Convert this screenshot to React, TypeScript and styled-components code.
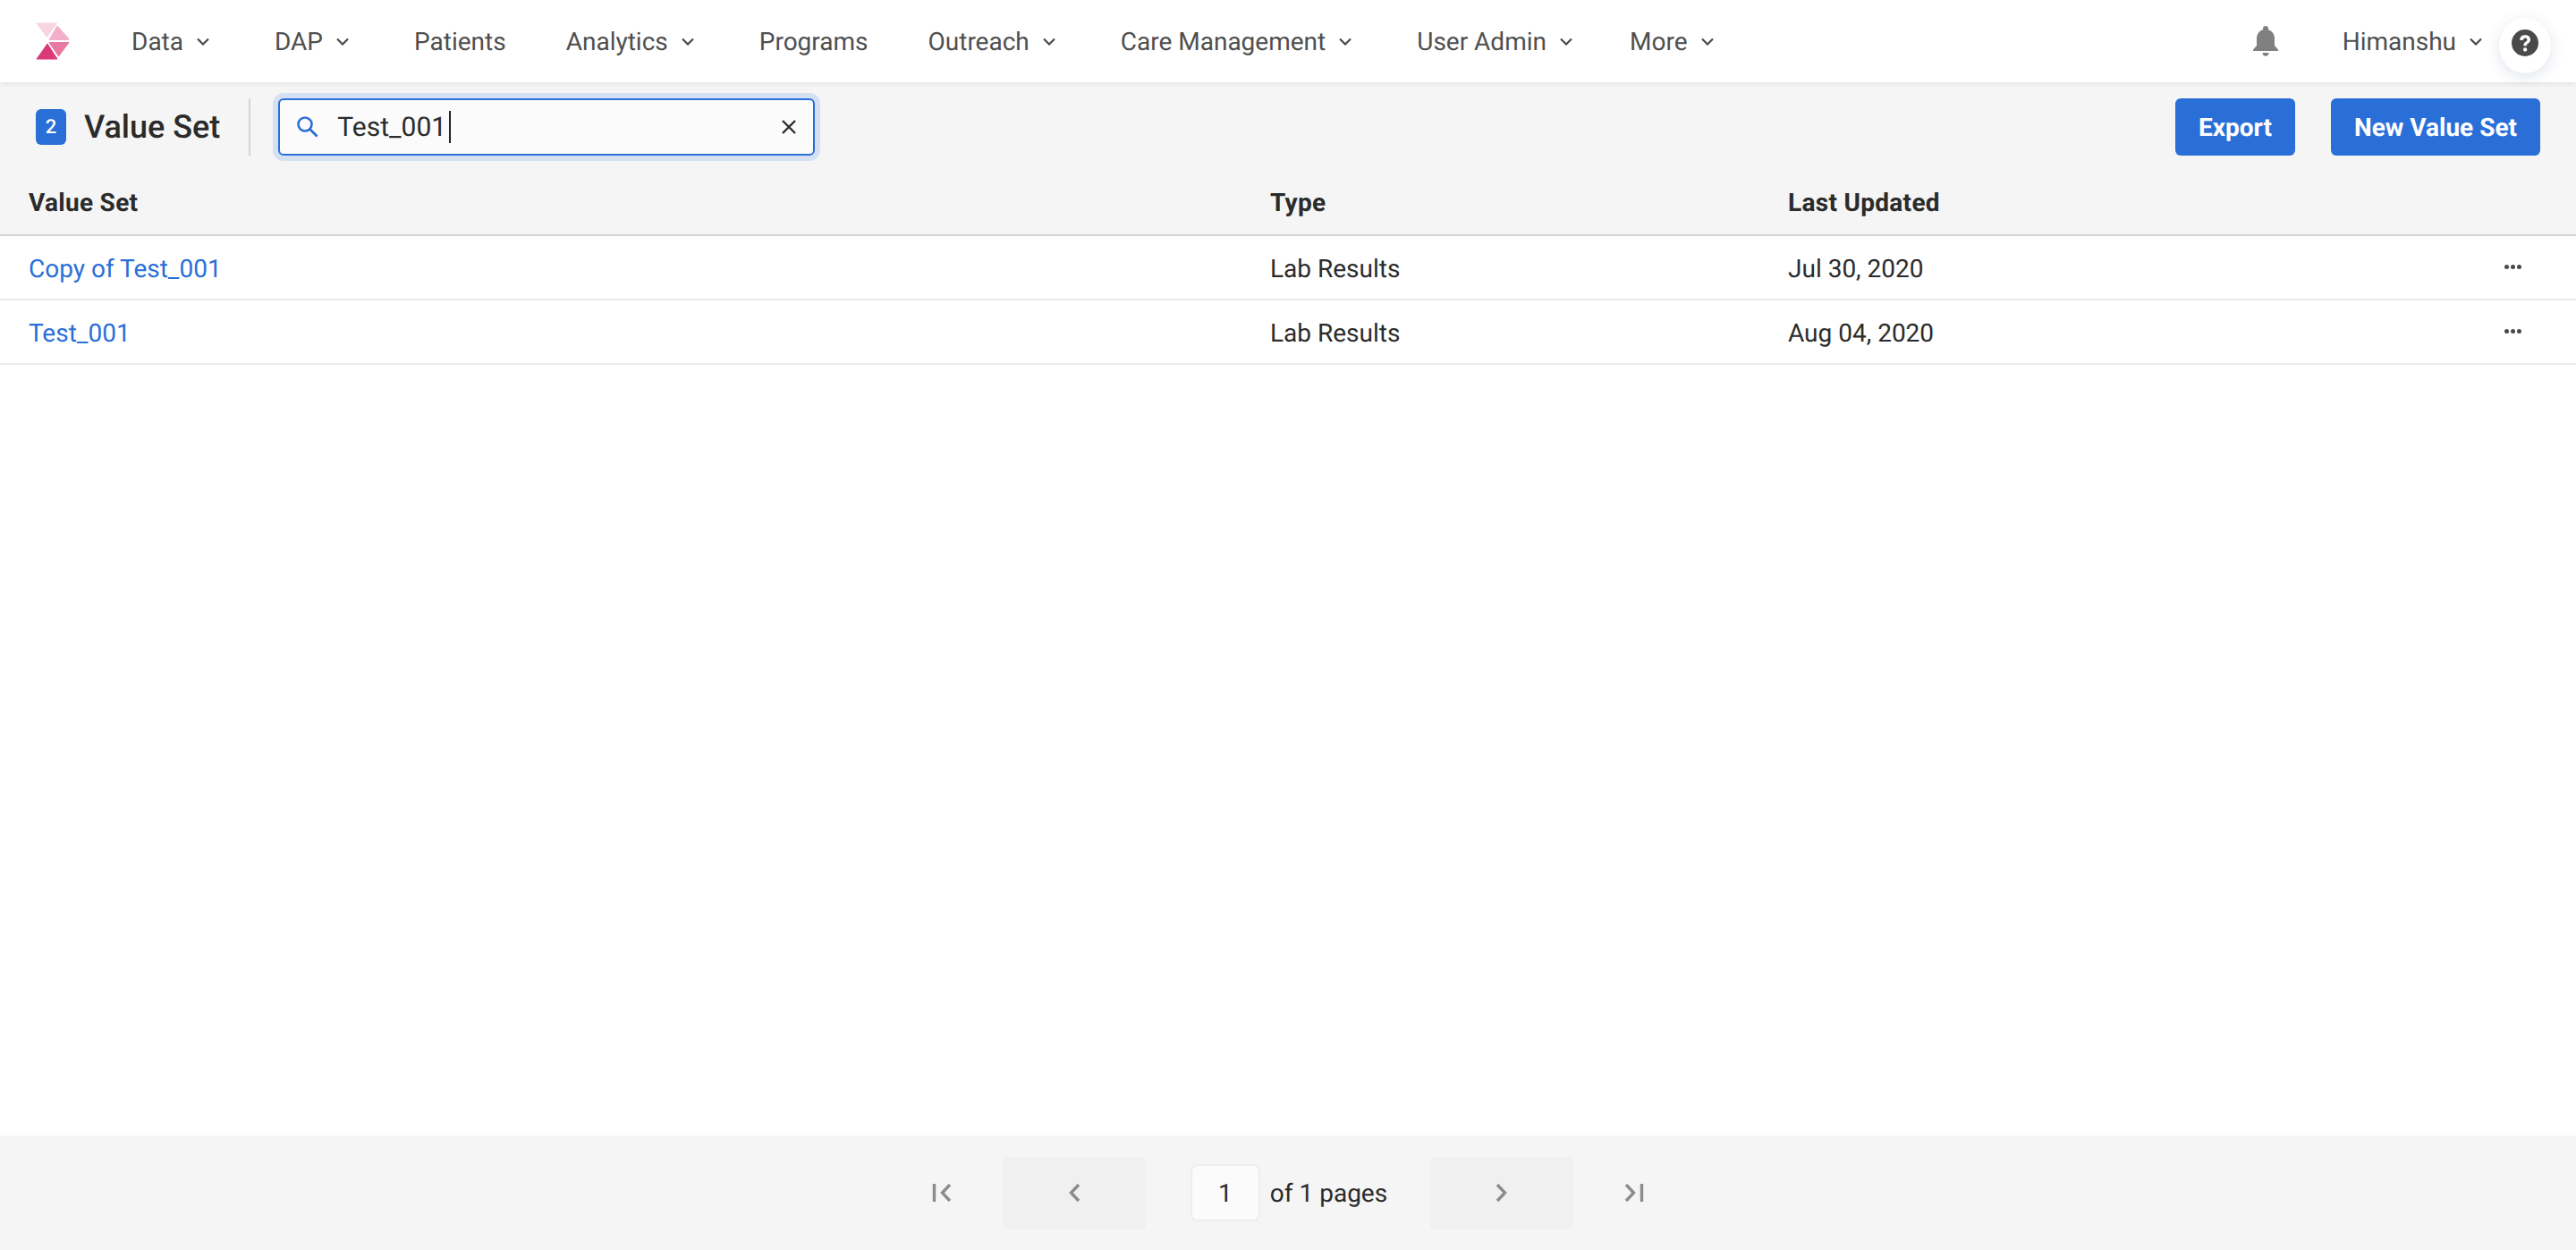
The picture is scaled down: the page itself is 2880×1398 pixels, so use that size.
import React from "react";
import styled, {createGlobalStyle} from "styled-components";

const navItems = [
    {title: "Data", arrow: true, trail: 6},
    {title: "DAP", arrow: true, trail: 6},
    {title: "Patients", arrow: false, trail: 0},
    {title: "Analytics", arrow: true, trail: 6},
    {title: "Programs", arrow: false, trail: 0},
    {title: "Outreach", arrow: true, trail: 6},
    {title: "Care Management", arrow: true, trail: 6},
    {title: "User Admin", arrow: true, trail: -3},
    {title: "More", arrow: true, trail: 0},
]

const rows = [
    {name: "Copy of Test_001", type: "Lab Results", updated: "Jul 30, 2020"},
    {name: "Test_001", type: "Lab Results", updated: "Aug 04, 2020"},
]

const Chevron = () => (
    <svg width="14" height="9" viewBox="0 0 14 9" fill="none">
        <path d="M1 1.500l6 6 6-6" stroke="#4a4a4a" strokeWidth="2.200"/>
    </svg>
)

const Logo = () => (
    <svg width="38" height="42" viewBox="0 0 38 42">
        <path d="M1 1h22.500L12.500 16.500z" fill="#f7d6e3" stroke="#f7d6e3" strokeLinejoin="round"/>
        <path d="M24 4l13 14.500-.5 1H15z" fill="#f2afc8" stroke="#f2afc8" strokeLinejoin="round"/>
        <path d="M15 22.500h22l-11.500 15.500z" fill="#e879a3" stroke="#e879a3" strokeLinejoin="round"/>
        <path d="M1 41l12-17 11 17z" fill="#db3a78" stroke="#db3a78" strokeLinejoin="round"/>
    </svg>
)

const PagerIcon = ({d}: {d: string}) => (
    <svg width="22" height="22" viewBox="0 0 22 22" fill="none">
        <path d={d} stroke="#8c8c8c" strokeWidth="3.400"/>
    </svg>
)

export default function App() {
    return (
        <Page>
            <GlobalStyle/>
            <Nav>
                <LogoBox><Logo/></LogoBox>
                <NavList>
                    {navItems.map(item => (
                        <NavItem key={item.title} $trail={item.trail}>
                            {item.title}
                            {item.arrow && <Chevron/>}
                        </NavItem>
                    ))}
                </NavList>
                <BellBox>
                    <svg width="32" height="34" viewBox="0 0 32 34" fill="#808080">
                        <path d="M16 0c1.800 0 3 1.200 3 3v1.200c4.600 1.300 7 5.300 7 10.300v7.500l4 4.500v1.500H2v-1.500l4-4.500v-7.500c0-5 2.400-9 7-10.300V3c0-1.800 1.200-3 3-3z"/>
                        <path d="M12.500 30h7c0 2.200-1.500 3.800-3.500 3.800s-3.500-1.600-3.500-3.800z"/>
                    </svg>
                </BellBox>
                <UserBox>
                    Himanshu
                    <Chevron/>
                </UserBox>
                <HelpBubble>
                    <svg width="30" height="30" viewBox="0 0 46 46">
                        <circle cx="23" cy="23" r="23" fill="#4a4a4a"/>
                        <path d="M14 18c0-5.400 3.800-8.500 9.300-8.500 5.200 0 9 3 9 7.700 0 3.400-1.900 5.100-4 6.600-1.800 1.300-2.500 2.100-2.500 4.200h-5.300c0-3.600 1.200-5.400 3.500-7 1.700-1.200 2.800-2.100 2.800-3.500 0-1.800-1.500-3-3.300-3-2.200 0-3.600 1.400-3.700 3.900z" fill="#fff"/>
                        <circle cx="23.200" cy="34.500" r="3.300" fill="#fff"/>
                    </svg>
                </HelpBubble>
            </Nav>
            <Toolbar>
                <Badge>2</Badge>
                <Title>Value Set</Title>
                <Divider/>
                <SearchBox>
                    <svg width="26" height="26" viewBox="0 0 26 26" fill="none">
                        <circle cx="10" cy="10" r="7.500" stroke="#2a6fd8" strokeWidth="2.600"/>
                        <path d="M15.500 15.500l8 8" stroke="#2a6fd8" strokeWidth="2.800"/>
                    </svg>
                    <SearchText>Test_001<Caret/></SearchText>
                    <svg width="18" height="18" viewBox="0 0 18 18" fill="none">
                        <path d="M2 2l14 14M16 2L2 16" stroke="#2b2b2b" strokeWidth="2.400"/>
                    </svg>
                </SearchBox>
                <Actions>
                    <PrimaryButton>Export</PrimaryButton>
                    <PrimaryButton>New Value Set</PrimaryButton>
                </Actions>
            </Toolbar>
            <HeaderRow>
                <span>Value Set</span>
                <span>Type</span>
                <span>Last Updated</span>
            </HeaderRow>
            <Rows>
                {rows.map(row => (
                    <Row key={row.name}>
                        <RowLink>{row.name}</RowLink>
                        <span>{row.type}</span>
                        <span>{row.updated}</span>
                        <Dots>
                            <i/><i/><i/>
                        </Dots>
                    </Row>
                ))}
            </Rows>
            <Footer>
                <PagerIcon d="M2.500 1v20M20 2l-8.500 9 8.500 9"/>
                <PagerButton $left={57} $right={0}><PagerIcon d="M16 2l-8.500 9 8.500 9"/></PagerButton>
                <PageInput>1</PageInput>
                <PageText>of 1 pages</PageText>
                <PagerButton $left={0} $right={57}><PagerIcon d="M6 2l8.500 9-8.500 9"/></PagerButton>
                <PagerIcon d="M19.500 1v20M2 2l8.500 9-8.500 9"/>
            </Footer>
        </Page>
    )
}

const GlobalStyle = createGlobalStyle`
    html, body {
        margin: 0;
        padding: 0;
        background: #fff;
    }
    * {
        box-sizing: border-box;
    }
`

const Page = styled.div`
    display: flex;
    flex-direction: column;
    width: 2880px;
    height: 1398px;
    overflow: hidden;
    font-family: Roboto, "Liberation Sans", sans-serif;
    font-size: 28px;
    color: #2b2b2b;
    text-rendering: geometricPrecision;
`

const Nav = styled.header`
    position: relative;
    z-index: 2;
    display: flex;
    align-items: center;
    flex: 0 0 92px;
    padding-left: 40px;
    background: #fff;
    box-shadow: 0 1px 6px rgba(0, 0, 0, 0.1);
`

const LogoBox = styled.div`
    display: flex;
    margin-right: 69px;
`

const NavList = styled.nav`
    display: flex;
    align-items: center;
    gap: 67px;
    flex: 1;
`

const NavItem = styled.div<{ $trail: number }>`
    display: flex;
    align-items: center;
    gap: 15px;
    margin-right: ${props => props.$trail}px;
    color: #4f4f4f;
`

const BellBox = styled.div`
    display: flex;
    margin-right: 70px;
`

const UserBox = styled.div`
    display: flex;
    align-items: center;
    gap: 15px;
    margin-right: 105px;
    color: #4f4f4f;
`

const HelpBubble = styled.div`
    position: absolute;
    top: 20px;
    left: 2794px;
    display: flex;
    align-items: center;
    justify-content: center;
    width: 58px;
    height: 62px;
    padding-bottom: 6px;
    border-radius: 50%;
    background: #fff;
    box-shadow: 0 4px 16px rgba(60, 90, 150, 0.16);
`

const Toolbar = styled.section`
    display: flex;
    align-items: center;
    flex: 0 0 98px;
    padding: 18px 40px 16px;
    background: #f5f5f5;
`

const Badge = styled.div`
    display: flex;
    align-items: center;
    justify-content: center;
    width: 34px;
    height: 40px;
    border-radius: 6px;
    background: #2a6fd8;
    color: #fff;
    font-size: 22px;
    font-weight: 500;
`

const Title = styled.h1`
    margin: 0 0 0 20px;
    font-size: 36px;
    font-weight: 500;
    color: #2b2b2b;
`

const Divider = styled.div`
    width: 2px;
    height: 64px;
    margin: 0 31px 0 32px;
    background: #d4d4d4;
`

const SearchBox = styled.div`
    display: flex;
    align-items: center;
    width: 600px;
    height: 64px;
    padding: 0 18px 0 18px;
    border: 2px solid #2a6fd8;
    border-radius: 6px;
    background: #fbfbfb;
    box-shadow: 0 0 0 6px #d5e1f3;
`

const SearchText = styled.div`
    display: flex;
    align-items: center;
    flex: 1;
    margin-left: 20px;
    font-size: 30px;
    color: #2b2b2b;
`

const Caret = styled.span`
    width: 2px;
    height: 36px;
    margin-left: 3px;
    background: #222;
`

const Actions = styled.div`
    display: flex;
    gap: 40px;
    margin-left: auto;
`

const PrimaryButton = styled.button`
    height: 64px;
    padding: 0 26px;
    border: none;
    border-radius: 6px;
    background: #2a6fd8;
    color: #fff;
    font-family: inherit;
    font-size: 28px;
    font-weight: 700;
    text-rendering: geometricPrecision;
`

const HeaderRow = styled.div`
    display: grid;
    grid-template-columns: 1388px 579px 1fr;
    align-items: center;
    flex: 0 0 74px;
    padding: 0 32px;
    border-bottom: 2px solid #d2d2d2;
    background: #f5f5f5;
    font-weight: 700;
    letter-spacing: 0.3px;
    color: #2b2b2b;
`

const Rows = styled.div`
    flex: 1;
`

const Row = styled.div`
    display: grid;
    grid-template-columns: 1388px 579px 1fr 30px;
    align-items: center;
    height: 72px;
    padding: 2px 50px 0 32px;
    border-bottom: 2px solid #ebebeb;
`

const RowLink = styled.a`
    color: #2a6fd8;
`

const Dots = styled.div`
    display: flex;
    gap: 2px;
    margin-bottom: 4px;
    i {
        width: 5px;
        height: 5px;
        border-radius: 50%;
        background: #4a4a4a;
    }
`

const Footer = styled.footer`
    display: flex;
    align-items: center;
    justify-content: center;
    flex: 0 0 128px;
    background: #f5f5f5;
`

const PagerButton = styled.div<{ $left: number, $right: number }>`
    display: flex;
    align-items: center;
    justify-content: center;
    width: 160px;
    height: 81px;
    margin: 0 ${props => props.$right}px 0 ${props => props.$left}px;
    border-radius: 4px;
    background: #f0f0f0;
`

const PageInput = styled.div`
    display: flex;
    align-items: center;
    justify-content: center;
    width: 78px;
    height: 64px;
    margin-left: 50px;
    border: 2px solid #eee;
    border-radius: 8px;
    background: #fbfbfb;
`

const PageText = styled.div`
    margin: 0 48px 0 11px;
`
